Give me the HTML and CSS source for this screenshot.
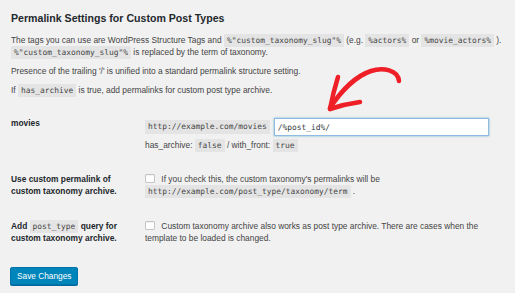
FILE: index.html
```html
<!DOCTYPE html>
<html>
<head>
<meta charset="utf-8">
<link rel="stylesheet" href="styles.css">
</head>
<body>
<div class="wrap">
  <h2 class="title">Permalink Settings for Custom Post Types</h2>
  <p class="note">The tags you can use are WordPress Structure Tags and <code>%"custom_taxonomy_slug"%</code> (e.g. <code>%actors%</code> or <code>%movie_actors%</code> ).<br><code>%"custom_taxonomy_slug"%</code> is replaced by the term of taxonomy.</p>
  <p class="note">Presence of the trailing '/' is unified into a standard permalink structure setting.</p>
  <p class="note">If <code>has_archive</code> is true, add permalinks for custom post type archive.</p>

  <div class="form-table">
    <div class="row">
      <div class="th">movies</div>
      <div class="td first">
        <div class="url-row"><code>http://example.com/movies</code><input class="slug" type="text" value="/%post_id%/"></div>
        <div class="meta">has_archive: <code>false</code> / with_front: <code>true</code></div>
      </div>
    </div>
    <div class="row">
      <div class="th">Use custom permalink of<br>custom taxonomy archive.</div>
      <div class="td">
        <label class="check"><input type="checkbox"> If you check this, the custom taxonomy's permalinks will be<br><code>http://example.com/post_type/taxonomy/term</code> .</label>
      </div>
    </div>
    <div class="row last">
      <div class="th">Add <code>post_type</code> query for<br>custom taxonomy archive.</div>
      <div class="td">
        <label class="check"><input type="checkbox"> Custom taxonomy archive also works as post type archive. There are cases when the<br>template to be loaded is changed.</label>
      </div>
    </div>
  </div>

  <div class="submit"><button class="button-primary">Save Changes</button></div>

  <svg class="arrow" viewBox="0 0 515 293" width="515" height="293" aria-hidden="true">
    <path d="M399 81 C 398 70, 383 67, 371 71 C 356 76, 341 91, 330 108" />
    <path d="M338 77 Q 333 93 330 109" />
    <path d="M330 109 Q 345 104 360 102" />
  </svg>
</div>
</body>
</html>
```
FILE: styles.css
```css
html, body {
  margin: 0;
  padding: 0;
  background: #f1f1f1;
}
body {
  width: 515px;
  height: 293px;
  overflow: hidden;
  font-family: "Liberation Sans", Arial, sans-serif;
  font-size: 8.4px;
  color: #444;
}
.wrap {
  padding: 11px 10px 0 11px;
}
.title {
  margin: 0;
  font-size: 10.6px;
  line-height: 15px;
  font-weight: 700;
  color: #23282d;
}
.note {
  margin: 7px 0 0;
  line-height: 12px;
  white-space: nowrap;
}
.title + .note {
  margin-top: 8px;
}
code {
  font-family: "DejaVu Sans Mono", "Liberation Mono", monospace;
  font-size: 7.9px;
  line-height: 1;
  background: #e4e4e4;
  padding: 2px 3px;
  color: #444;
}
.form-table {
  margin-top: 10px;
}
.row {
  display: grid;
  grid-template-columns: 134px 1fr;
}
.th {
  padding: 11px 10px 11px 0;
  font-weight: 700;
  line-height: 12px;
  color: #23282d;
  white-space: nowrap;
}
.row.last .th,
.row.last .td {
  padding-top: 12px;
}
.th code {
  font-weight: 400;
}
.td {
  padding: 11px 0;
  line-height: 12px;
  white-space: nowrap;
}
.td.first {
  padding-top: 12px;
}
.url-row {
  display: flex;
  align-items: center;
  gap: 4px;
}
.url-row code {
  padding: 3px 3px;
}
.slug {
  box-sizing: border-box;
  width: 215px;
  height: 18px;
  margin: 0;
  padding: 0 3px;
  border: 1px solid #8fbbe3;
  box-shadow: 0 0 2px rgba(30, 140, 190, 0.6);
  background: #fff;
  font-family: "DejaVu Sans Mono", "Liberation Mono", monospace;
  font-size: 7.9px;
  color: #32373c;
  outline: none;
}
.meta {
  margin-top: 3px;
}
.check input {
  appearance: none;
  -webkit-appearance: none;
  box-sizing: border-box;
  width: 10px;
  height: 9px;
  margin: 0 4px 0 0;
  vertical-align: -1px;
  border: 1px solid #c3c6c9;
  border-radius: 1px;
  background: #fff;
  box-shadow: inset 0 1px 1px rgba(0, 0, 0, 0.06);
}
.submit {
  margin-top: 12px;
}
.button-primary {
  height: 18px;
  margin: 0 0 0 -1px;
  padding: 0 6px;
  border: 1px solid #0073aa;
  border-radius: 2px;
  background: #0085ba;
  box-shadow: 0 1px 0 #006799;
  color: #fff;
  font-family: "Liberation Sans", Arial, sans-serif;
  font-size: 8.3px;
  line-height: 16px;
}
.arrow {
  position: absolute;
  left: 0;
  top: 0;
  pointer-events: none;
  fill: none;
  stroke: #ee1f27;
  stroke-width: 4.5;
  stroke-linecap: round;
  stroke-linejoin: round;
}
```
